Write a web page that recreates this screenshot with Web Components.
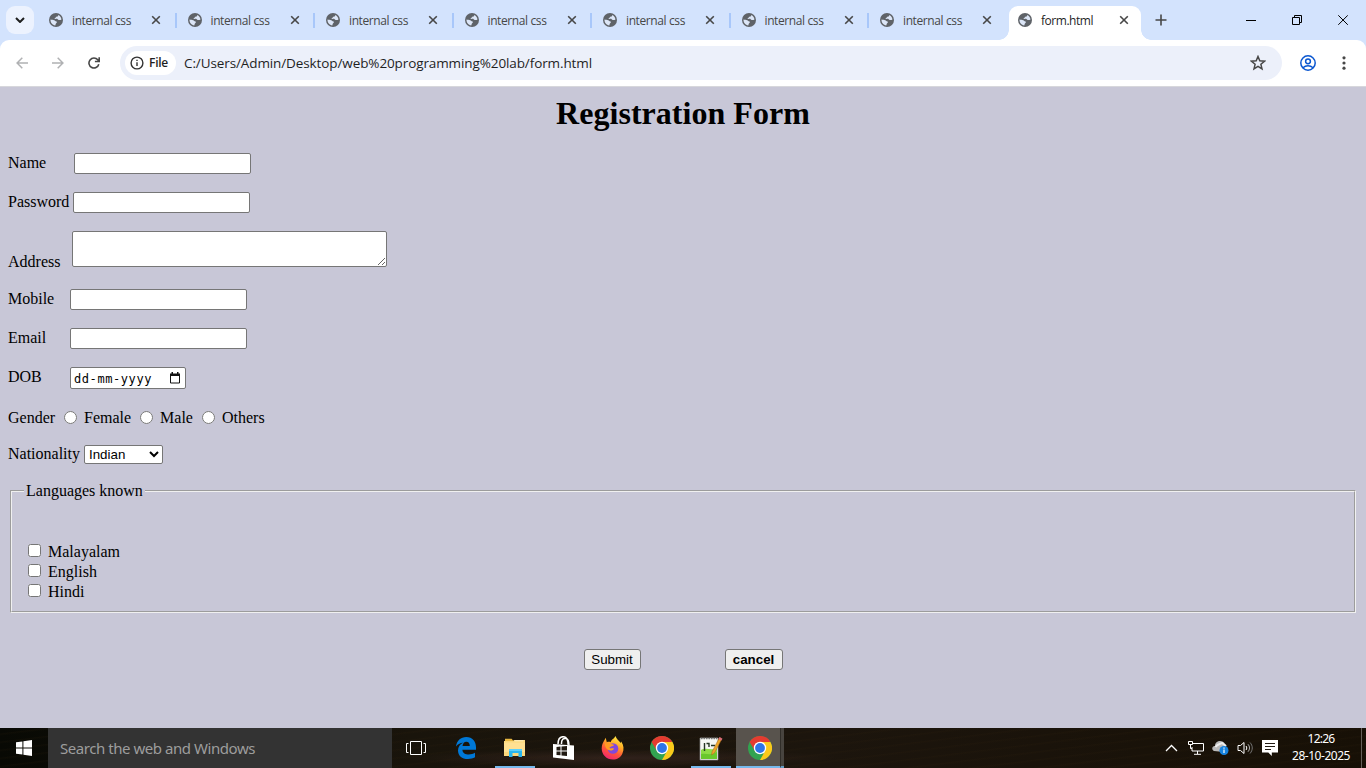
<!DOCTYPE html>
<html lang="en">
<head>
<meta charset="utf-8">
<title>form.html</title>
<style>
html,body{margin:0;height:100%;overflow:hidden}
body{font-family:"Liberation Serif",serif;font-size:16px;color:#000}
</style>
</head>
<body>
<desktop-screen></desktop-screen>
<script>
const define=(name,css,html,ready)=>customElements.define(name,class extends HTMLElement{
  constructor(){super();this.attachShadow({mode:'open'});}
  connectedCallback(){
    this.shadowRoot.innerHTML='<style>*{box-sizing:border-box}'+css+'</style>'+(typeof html==='function'?html(this):html);
    if(ready)ready(this);
  }
});

/* Single-line text spread over the width given in its "w" attribute. */
define('fit-text',':host{display:block;white-space:nowrap;flex:none}span{display:inline-block}','<span><slot></slot></span>',el=>{
  const w=+el.getAttribute('w'),s=el.shadowRoot.querySelector('span'),n=el.textContent.length;
  el.style.width=w+'px';
  s.style.letterSpacing=((w-s.getBoundingClientRect().width)/n)+'px';
});

const icons={
globe:['14 14','<circle cx="7" cy="7" r="7" fill="#5f6368"/><path d="M1.500 6.500c1.300.4 2.600.2 3.700.7.900.4 1.200 1.200 2.200 1.200.9.100.6 1 0 1.500-.8.700-.7 1.400-1.100 2.600C3.500 12.100 1.300 9.700 1.500 6.500zM9.200 1.900c-.1 1-.2 1.600-1.300 1.700-.9.100-.5.900-1.400 1.100-.8.200-1 .6-.7 1.200 1 .2 2-.4 2.700.2.600.6.900 1.100 2 1 .8-.1 1.200-.5 1.900-.4.100-2.200-1.200-4-3.200-4.800z" fill="#dce6f7"/>'],
close:['10 10','<path d="M1.200 1.200 8.800 8.800M8.800 1.200 1.200 8.800" stroke="#474747" stroke-width="1.600"/>'],
down:['10 6','<path d="M1 1 5 5 9 1" fill="none" stroke="#1f1f1f" stroke-width="2"/>'],
plus:['12 12','<path d="M6 .5v11M.5 6h11" stroke="#474747" stroke-width="1.600"/>'],
min:['10 10','<path d="M0 5.500h10" stroke="#000"/>'],
restore:['10 10','<path d="M.5 2.500h7v7h-7zM2.500 2.500v-2h7v7h-2" fill="none" stroke="#000"/>'],
wclose:['10 10','<path d="M.3.300l9.500 9.500M9.800.300.300 9.800" stroke="#000"/>'],
back:['12 12','<path d="M12 6H1.200M6.300.8 1.100 6l5.200 5.200" fill="none" stroke="#b0b1b3" stroke-width="1.500"/>'],
fwd:['12 12','<path d="M0 6h10.800M5.700.8 10.900 6l-5.200 5.200" fill="none" stroke="#b0b1b3" stroke-width="1.500"/>'],
reload:['12 12','<path d="M10.800 7.300A5 5 0 1 1 9.800 2.800L11 4.200M11.200.2v4.300H6.900" fill="none" stroke="#474747" stroke-width="1.600"/>'],
info:['14 14','<circle cx="7" cy="7" r="5.900" fill="none" stroke="#333" stroke-width="1.400"/><path d="M7 6.200V10M7 3.800v1.300" stroke="#333" stroke-width="1.400"/>'],
star:['16 16','<path d="M8 1.500 9.800 5.800 14.500 6.200 10.900 9.300 12 13.900 8 11.400 4 13.900 5.100 9.300 1.500 6.200 6.200 5.800z" fill="none" stroke="#474747" stroke-width="1.500"/>'],
user:['16 16','<circle cx="8" cy="8" r="7.200" fill="none" stroke="#0b57d0" stroke-width="1.500"/><circle cx="8" cy="6.300" r="2.400" fill="none" stroke="#0b57d0" stroke-width="1.500"/><path d="M3 12.800c2.800-2.700 7.200-2.700 10 0" fill="none" stroke="#0b57d0" stroke-width="1.500"/>'],
dots:['4 14','<g fill="#474747"><circle cx="2" cy="1.800" r="1.600"/><circle cx="2" cy="7" r="1.600"/><circle cx="2" cy="12.200" r="1.600"/></g>'],
calendar:['12 12','<path d="M1.500 2.500h9v8.500h-9z" fill="none" stroke="#111"/><path d="M1 1.500h10V4H1zM2.500 0h1.500v2H2.500zM8 0h1.500v2H8z" fill="#111"/>'],
win:['16 16','<path d="M0 2.300 6.400 1.400V7.500H0zM7.400 1.200 16 0v7.500H7.400zM0 8.500h6.400v6.100L0 13.700zM7.400 8.500H16V16l-8.600-1.200z" fill="#fff"/>'],
task:['20 16','<path d="M4.500 1.500h11v13h-11zM2.500 3.500h-2v9h2M17.500 3.500h2v9h-2" fill="none" stroke="#fff"/>'],
edge:['20 22','<path d="M0 9.600C.7 3.700 4.800 0 10.300 0 16.500 0 20 4.500 20 10.200v2.500H6.400c.2 3.400 3 4.800 6.400 4.800 2.300 0 4.400-.6 6.200-1.700v4.500C17 21.500 14.700 22 12 22 5.800 22 2 18.500 2 13.400c0-3.400 2-6.200 5-7.600-1.600-.2-4.800.8-7 3.800zM6.500 8.900h7.300c0-2.700-1.300-4.200-3.500-4.200-2 0-3.400 1.500-3.800 4.200z" fill="#0078d7"/>'],
folder:['22 20','<path d="M1 3V.8h6.600L9.500 3z" fill="#e8b741"/><path d="M0 3h9l1-1h11v16H0z" fill="#fbd77b"/><path d="M0 4.500h21V14H0z" fill="#ffe092"/><path d="M10.500 2.800h9" stroke="#fff3c9"/><path d="M5 11h13v8h-3.500v-4h-6v4H5z" fill="#29b6ef"/><path d="M5 11h13v2H5z" fill="#5dd0fa"/>'],
store:['22 24','<path d="M0 8 21 9.500V24L0 21.500z" fill="#fff"/><path d="M5 8.200C5 3 7 .7 10.200.7s4.800 3 4.800 8M8.500 8C8.300 3 10.500 2 13 2.500c2.700.5 3 3 3 7" fill="none" stroke="#fff" stroke-width="1.500"/><path d="M3.500 10.900 7.500 10.500v4h-4zM8.500 10.400l5.500-.5v4.600H8.500zM3.500 15.500h4v3.800l-4-.4zM8.500 15.500H14v4.500l-5.500-.6z" fill="#211a12"/>'],
firefox:['24 24','<defs><linearGradient id="f" x1=".75" y1="0" x2=".3" y2="1"><stop stop-color="#fff14a"/><stop offset=".35" stop-color="#ffad25"/><stop offset=".65" stop-color="#ff5639"/><stop offset="1" stop-color="#ef2275"/></linearGradient></defs><path d="M3.200 4.500 4.700 1.800 5.800 6.200C7.300 5.600 8.500 5.800 9.800 6.200 9.700 3.800 13 3 14.500 0c.8 3.300 3.500 4.400 5.100 7l.6-1.500c2.700 3.800 3 8.300 1.200 12C19.600 21.500 16 23.600 12 23.600 5.500 23.600.7 18.600.7 12.500c0-3.200 1.200-5.800 2.500-8z" fill="url(#f)"/><circle cx="12" cy="12.500" r="5.300" fill="#8148dc"/><path d="M4 7.500c3.500-1 5.500.5 9 1.300 0 1.700-4 1.500-4.500 3 1 1.500 2.300 0 4.500.7-.8 2.300-4 2.700-6.500 1C5 12.400 3.500 10 4 7.500z" fill="#ff9b22"/>'],
chrome:['24 24','<circle cx="12" cy="12" r="12" fill="#32a350"/><path d="M1.600 6A12 12 0 0 1 22.400 6H12L7 15z" fill="#e43b30"/><path d="M22.400 6A12 12 0 0 1 12 24l5.200-9.200L12 6z" fill="#fbc91b"/><circle cx="12" cy="12" r="6.200" fill="#fff"/><circle cx="12" cy="12" r="4.900" fill="#2f75e8"/>'],
npp:['24 25','<path d="M1 2h18v22H1z" fill="#f6f7f3" stroke="#888" stroke-width=".7"/><path d="M2 14c5-3 10 1 16-2v11H2z" fill="#8edb45"/><path d="M2 18c6-1 9 2 16-2v7H2z" fill="#6ac72b"/><path d="M2 2.500h16" stroke="#777" stroke-width="1.500" stroke-dasharray="1.500 1"/><path d="M5.500 7v8M7.500 7.500H10V11M12 9.500h4" stroke="#263523" stroke-width="1.400" fill="none"/><path d="M20.500 1.500 22.800 3 15.500 17l-3 2 .7-3.600z" fill="#eda62a" stroke="#a46518" stroke-width=".5"/><path d="m20 2 2.800 1.800" stroke="#da6b78" stroke-width="2.500"/>'],
up:['12 8','<path d="M.5 7 6 1.500 11.500 7" fill="none" stroke="#fff" stroke-width="1.300"/>'],
net:['16 14','<path d="M5 2.500h10.500v7.500H4V6M9.500 10v3M6 13.300h7M.5.500h4v3h-4zM2.500 4v3.500H4" fill="none" stroke="#fff"/>'],
cloud:['17 16','<path d="M2 11C-1.500 9 1 5.500 3 6c0-5 7-7 10-2l1.500 2-3 6z" fill="#b9b9b9"/><path d="M3.500 7c2-3 5-3 6.500-4l4 3" stroke="#eee" stroke-width="2" fill="none"/><circle cx="12" cy="10.500" r="4.500" fill="#1683df"/><path d="M12 9.500v3.500M12 7.500v1.200" stroke="#fff" stroke-width="1.200"/>'],
sound:['17 14','<path d="M1 4.500h2.500L7 1.500v11L3.500 9.500H1zM9 5c1 1.300 1 2.700 0 4" fill="none" stroke="#fff"/><path d="M11 3.300c2 2.300 2 5 0 7.400" fill="none" stroke="#bbb"/><path d="M13 1.500c3 3.300 3 7.500 0 11" fill="none" stroke="#777"/>'],
note:['16 16','<path d="M0 0h16v12.500h-6.200V16l-3.500-3.500H0z" fill="#fff"/><path d="M3 3.500h10M3 6.500h10M3 9.500h6" stroke="#221b12"/>']
};
define('ui-icon',':host{display:block;flex:none}svg{display:block;width:100%;height:100%}',el=>{
  const [vb,body]=icons[el.getAttribute('name')],[w,h]=vb.split(' ');
  el.style.width=(el.getAttribute('w')||w)+'px';el.style.height=(el.getAttribute('h')||h)+'px';
  return `<svg viewBox="0 0 ${vb}">${body}</svg>`;
});

define('browser-tab',`:host{display:flex;align-items:center;width:138.500px;height:40px;padding-left:12px;font:12px "Open Sans",sans-serif;color:#474747;flex:none}
fit-text{margin-left:9px;margin-top:1px}.x{margin-left:auto;margin-right:13.500px}i{width:2px;height:15px;background:#a8c7fa;margin-right:-1px}
:host([active]){color:#1f1f1f;background:#fff;height:34px;margin-top:6px;width:132px;padding-left:9px;padding-bottom:6px;border-radius:9px 9px 0 0;position:relative}
:host([active]) i,:host([last]) i{visibility:hidden}:host([active]) .x{margin-right:11px}
:host([active])::before,:host([active])::after{content:"";position:absolute;bottom:0;width:10px;height:10px;background:radial-gradient(circle at 0 0,transparent 9.500px,#fff 10px);left:-10px}
:host([active])::after{left:auto;right:-10px;transform:scaleX(-1)}`,
 el=>`<ui-icon name="globe"></ui-icon><fit-text w="${el.getAttribute('w')||59}">${el.getAttribute('label')}</fit-text><ui-icon class="x" name="close"></ui-icon><i></i>`);

define('tab-strip',`:host{display:flex;height:40px;background:#d3e3fd;align-items:flex-start}
.menu{width:28px;height:28px;border-radius:9px;background:#ecf2fe;margin:6px 3px 0 6px;display:grid;place-items:center;flex:none}
browser-tab[active]{margin-left:2.500px}.plus{margin:14px 0 0 14px}.ctl{display:flex;margin:15px 18px 0 auto;gap:36px}`,
`<div class="menu"><ui-icon name="down"></ui-icon></div>${'<browser-tab label="internal css"></browser-tab>'.repeat(6)}<browser-tab last label="internal css"></browser-tab><browser-tab active w="52" label="form.html"></browser-tab><ui-icon class="plus" name="plus"></ui-icon><div class="ctl"><ui-icon name="min"></ui-icon><ui-icon name="restore"></ui-icon><ui-icon name="wclose"></ui-icon></div>`);

define('tool-bar',`:host{display:block;background:#d3e3fd}.bar{display:flex;align-items:center;height:47px;padding:0 20px 1px 16px;background:#fff;border-radius:9px 9px 0 0;border-bottom:1px solid #d7d7dc;font-family:"Open Sans",sans-serif}
.nav{display:flex;gap:24px;margin-right:20px}.omni{display:flex;align-items:center;flex:1;height:34px;border-radius:17px;background:#ecf0fa;padding:0 16px 0 5px;color:#1f1f1f}
.file{width:51px;height:24px;border-radius:12px;background:#fff;display:flex;align-items:center;padding-left:5px;gap:5px;font-size:12px;font-weight:600;margin-right:8px}
.url{font-size:13.500px}.star{margin-left:auto}.u{margin:0 26px 0 18px}`,
`<div class="bar"><div class="nav"><ui-icon name="back"></ui-icon><ui-icon name="fwd"></ui-icon><ui-icon name="reload"></ui-icon></div><div class="omni"><div class="file"><ui-icon name="info"></ui-icon><fit-text w="19">File</fit-text></div><fit-text class="url" w="408">C:/Users/Admin/Desktop/web%20programming%20lab/form.html</fit-text><ui-icon class="star" name="star"></ui-icon></div><ui-icon class="u" name="user"></ui-icon><ui-icon name="dots"></ui-icon></div>`);

/* Label followed by a control; --x is the label column, --gap the space above. */
define('form-row',`:host{display:flex;align-items:center;height:21px;margin-top:var(--gap,18px)}.l{width:var(--x);line-height:18px;flex:none;white-space:nowrap;margin-top:-2px}:host([mid]) .l{margin-top:0}:host([low]){align-items:flex-end}:host([low]) .l{margin-bottom:-4px}`,
el=>`<div class="l">${el.getAttribute('label')}</div><slot></slot>`);

define('registration-form',`:host{display:block;height:641px;background:#c8c7d7;padding:8px;font:16px "Liberation Serif",serif}
h1{font-size:32px;line-height:37px;margin:0;text-align:center;letter-spacing:.03px}
input[type=text],input[type=password]{width:177px;height:21px;margin:0;border:1px solid #767676;border-radius:2px;background:#fff}
textarea{width:315px;height:36px;margin:0;border:1px solid #767676;border-radius:2px}
.date{width:116px;height:22px;border:1px solid #767676;border-radius:2px;background:#fff;display:flex;align-items:center;justify-content:space-between;padding:2px 3px 0 3px;font:12px "DejaVu Sans Mono",monospace}.date ui-icon{margin:-3px 1px 0 0}
input[type=radio]{margin:-2px 7px 0 0;width:13px;height:13px}.r{margin-right:9px;white-space:nowrap}
select{width:79px;height:19px;margin:0;border:1px solid #767676;border-radius:2px;background:#fff;font:13.333px "Liberation Sans",sans-serif;padding:0;color:#000}
fieldset{margin:18px 2px 0;border:2px groove #f0f0f0;height:131px;padding:0 14px 0 12px}
legend{padding:0 2px;line-height:18px}.checks{padding:42px 0 0 2px}.c{display:flex;height:20px;align-items:center}.c input{margin:-3px 7px 0 2px}
.actions{display:flex;justify-content:center;gap:84px;margin-top:36px;height:21px}button{width:57px;height:21px;border:1px solid #767676;border-radius:3px;background:#efefef;font:13.333px "Liberation Sans",sans-serif;padding:0;color:#000}button+button{width:58px;font-weight:bold}`,
`<h1>Registration Form</h1>
<form-row label="Name" style="--x:66px;--gap:21px"><input type="text"></form-row>
<form-row label="Password" style="--x:65px"><input type="password"></form-row>
<form-row low label="Address" style="--x:64px;height:36px"><textarea></textarea></form-row>
<form-row label="Mobile" style="--x:62px;--gap:22px"><input type="text"></form-row>
<form-row label="Email" style="--x:62px"><input type="text"></form-row>
<form-row label="DOB" style="--x:62px;height:22px"><div class="date"><fit-text w="78">dd-mm-yyyy</fit-text><ui-icon name="calendar"></ui-icon></div></form-row>
<form-row mid label="Gender" style="--x:56px;--gap:19px;height:20px"><input type="radio"><span class="r">Female</span><input type="radio"><span class="r">Male</span><input type="radio"><span class="r">Others</span></form-row>
<form-row label="Nationality" style="--x:76px;--gap:17px;height:19px"><select><option>Indian</option></select></form-row>
<fieldset><legend>Languages known</legend><div class="checks"><label class="c"><input type="checkbox">Malayalam</label><label class="c"><input type="checkbox">English</label><label class="c"><input type="checkbox">Hindi</label></div></fieldset>
<div class="actions"><button>Submit</button><button>cancel</button></div>`);

define('task-item',':host{display:grid;place-items:center;width:40px;height:40px;flex:none}:host([open]){border-bottom:2px solid #76b9ed;padding-top:2px}:host([current]){background:#58534d;width:44px;padding-left:4px}','<slot></slot>');

define('task-bar',`:host{display:flex;height:40px;color:#fff;font-family:"Noto Sans",sans-serif;background:repeating-linear-gradient(173deg,transparent 0 5px,#34240f25 6px,transparent 8px),radial-gradient(ellipse at 620px 30px,#30211b,transparent 220px),linear-gradient(90deg,#080904,#19140b 30%,#1c150d 60%,#171006)}
.start{width:48px;display:grid;place-items:center}.search{width:344px;background:#333;padding:10px 12px;color:#9d9d9d;font-size:15px;line-height:21px}
.apps{display:flex;gap:9px;margin-left:5px;flex:none}.apps task-item:first-child{padding-right:2px}.apps task-item:last-child{margin-left:-4px}.stack{width:4px;border-left:1px solid #302d28;background:#48443f;border-bottom:2px solid #639bc5}
.tray{display:flex;align-items:center;gap:8px;margin-left:auto}.tray ui-icon:first-child{margin-right:2px}.clock{width:70px;display:flex;flex-direction:column;align-items:center;font-size:12px;line-height:17px;padding-bottom:2px}.edge{height:40px;width:5px;border-left:1px solid #65605a;margin-left:-3px}
.tray ui-icon{margin-left:0}`,
`<div class="start"><ui-icon name="win"></ui-icon></div><div class="search"><fit-text w="195">Search the web and Windows</fit-text></div><div class="apps">
<task-item><ui-icon name="task"></ui-icon></task-item><task-item><ui-icon name="edge"></ui-icon></task-item><task-item open><ui-icon name="folder"></ui-icon></task-item><task-item><ui-icon name="store"></ui-icon></task-item><task-item><ui-icon name="firefox"></ui-icon></task-item><task-item><ui-icon name="chrome"></ui-icon></task-item><task-item open><ui-icon name="npp"></ui-icon></task-item><task-item open current><ui-icon name="chrome"></ui-icon></task-item></div><div class="stack"></div>
<div class="tray"><ui-icon name="up" w="13"></ui-icon><ui-icon name="net"></ui-icon><ui-icon name="cloud"></ui-icon><ui-icon name="sound"></ui-icon><ui-icon name="note"></ui-icon><div class="clock"><fit-text w="27">12:26</fit-text><fit-text w="58">28-10-2025</fit-text></div><div class="edge"></div></div>`);

define('desktop-screen',':host{display:flex;flex-direction:column;width:1366px;height:768px;overflow:hidden}tab-strip,tool-bar,registration-form,task-bar{flex:none}','<tab-strip></tab-strip><tool-bar></tool-bar><registration-form></registration-form><task-bar></task-bar>');
</script>
</body>
</html>
